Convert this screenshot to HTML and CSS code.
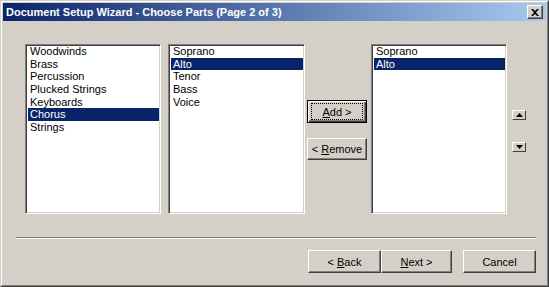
FILE: index.html
```html
<!DOCTYPE html>
<html lang="en">
<head>
    <meta charset="UTF-8">
    <title>Document Setup Wizard</title>
    <link rel="stylesheet" href="styles.css">
</head>
<body>
    <div class="window">
        <div class="frame">
            <div class="titlebar">
                <span class="title">Document Setup Wizard - Choose Parts (Page 2 of 3)</span>
                <button class="close-btn">
                    <svg width="8" height="7" viewBox="0 0 8 7">
                        <path d="M0 0h2l2 2 2-2h2L5 3.5 8 7H6L4 5 2 7H0l3-3.5z" fill="#000"/>
                    </svg>
                </button>
            </div>

            <div class="content">
                <div class="lists">
                    <ul class="listbox list-families">
                        <li>Woodwinds</li>
                        <li>Brass</li>
                        <li>Percussion</li>
                        <li>Plucked Strings</li>
                        <li>Keyboards</li>
                        <li class="selected">Chorus</li>
                        <li>Strings</li>
                    </ul>
                    <ul class="listbox list-instruments">
                        <li>Soprano</li>
                        <li class="selected">Alto</li>
                        <li>Tenor</li>
                        <li>Bass</li>
                        <li>Voice</li>
                    </ul>
                    <div class="move-buttons">
                        <button class="btn btn-default"><span class="focus"><span><u>A</u>dd &gt;</span></span></button>
                        <button class="btn"><span>&lt; <u>R</u>emove</span></button>
                    </div>
                    <ul class="listbox list-chosen">
                        <li>Soprano</li>
                        <li class="selected">Alto</li>
                    </ul>
                    <div class="order-buttons">
                        <button class="arrow-btn">
                            <svg width="7" height="4" viewBox="0 0 7 4"><path d="M3.5 0L7 4H0z" fill="#000"/></svg>
                        </button>
                        <button class="arrow-btn">
                            <svg width="7" height="4" viewBox="0 0 7 4"><path d="M0 0h7L3.5 4z" fill="#000"/></svg>
                        </button>
                    </div>
                </div>

                <div class="separator"></div>

                <div class="footer">
                    <button class="btn btn-nav"><span>&lt; <u>B</u>ack</span></button>
                    <button class="btn btn-nav btn-next"><span><u>N</u>ext &gt;</span></button>
                    <button class="btn btn-nav btn-cancel">Cancel</button>
                </div>
            </div>
        </div>
    </div>
</body>
</html>
```

FILE: styles.css
```css
/* Classic wizard dialog */
body {
    margin: 0;
    background-color: #d4d0c8;
    font-family: "Liberation Sans", Arial, sans-serif;
    font-size: 11px;
    color: #000000;
}

.window {
    width: 549px;
    height: 287px;
    box-sizing: border-box;
    border: 1px solid;
    border-color: #d4d0c8 #404040 #404040 #d4d0c8;
}

.frame {
    height: 100%;
    box-sizing: border-box;
    border: 1px solid;
    border-color: #ffffff #808080 #808080 #ffffff;
    padding: 1px;
    display: flex;
    flex-direction: column;
}

.titlebar {
    height: 18px;
    display: flex;
    align-items: center;
    justify-content: space-between;
    padding: 0 3px 0 3px;
    background: linear-gradient(to right, #0a246a, #a6caf0);
}

.title {
    color: #ffffff;
    font-weight: bold;
    font-size: 11px;
    white-space: nowrap;
}

.close-btn {
    width: 16px;
    height: 14px;
    padding: 0;
    margin: 0;
    display: flex;
    align-items: center;
    justify-content: center;
    background-color: #d4d0c8;
    border: 1px solid;
    border-color: #ffffff #404040 #404040 #ffffff;
    box-shadow: inset -1px -1px #808080;
}

.content {
    flex: 1;
    padding: 23px 10px 0 13px;
}

.lists {
    display: flex;
    align-items: flex-start;
    margin-left: 9px;
}

.listbox {
    list-style: none;
    margin: 0;
    height: 170px;
    box-sizing: border-box;
    background-color: #ffffff;
    border: 1px solid;
    border-color: #808080 #ffffff #ffffff #808080;
    box-shadow: inset 1px 1px #404040, inset -1px -1px #d4d0c8;
    padding: 0 1px 1px 2px;
}

.listbox li {
    height: 12.67px;
    line-height: 12.67px;
    padding-left: 2px;
    white-space: nowrap;
}

.listbox li.selected {
    background-color: #0a246a;
    color: #ffffff;
}

.list-families {
    width: 136px;
}

.list-instruments {
    width: 137px;
    margin-left: 7px;
}

.list-chosen {
    width: 136px;
    margin-left: 4px;
}

.move-buttons {
    display: flex;
    flex-direction: column;
    gap: 15px;
    margin-top: 56px;
    margin-left: 2px;
}

.btn {
    font-family: "Liberation Sans", Arial, sans-serif;
    font-size: 11px;
    color: #000000;
    width: 60px;
    height: 22px;
    padding: 0;
    background-color: #d4d0c8;
    border: 1px solid;
    border-color: #ffffff #404040 #404040 #ffffff;
    box-shadow: inset -1px -1px #808080, inset 1px 1px #d4d0c8;
    display: flex;
    align-items: center;
    justify-content: center;
}

.btn-default {
    height: 23px;
    border-color: #000000;
    box-shadow: inset 1px 1px #ffffff, inset -1px -1px #404040, inset -2px -2px #808080;
}

.focus {
    display: flex;
    align-items: center;
    justify-content: center;
    width: 50px;
    height: 15px;
    outline: 1px dotted #000000;
}

.order-buttons {
    display: flex;
    flex-direction: column;
    gap: 22px;
    margin-top: 66px;
    margin-left: 5px;
}

.arrow-btn {
    width: 14px;
    height: 10px;
    padding: 0;
    display: flex;
    align-items: center;
    justify-content: center;
    background-color: #d4d0c8;
    border: 1px solid;
    border-color: #ffffff #404040 #404040 #ffffff;
}

.separator {
    height: 0;
    margin-top: 23px;
    border-top: 1px solid #808080;
    border-bottom: 1px solid #ffffff;
}

.footer {
    display: flex;
    justify-content: flex-end;
    margin-top: 11px;
}

.btn-nav {
    width: 73px;
    height: 23px;
}

.btn-next {
    width: 71px;
}

.btn-cancel {
    margin-left: 11px;
}
```
